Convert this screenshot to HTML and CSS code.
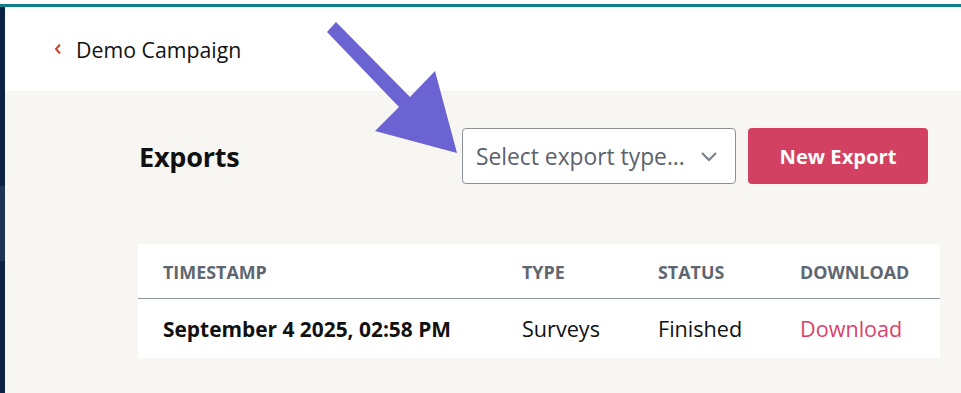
FILE: index.html
```html
<!DOCTYPE html>
<html>
<head>
<meta charset="utf-8">
<link rel="stylesheet" href="styles.css">
</head>
<body>
<div class="topgap"></div>
<div class="topbar"></div>
<div class="app">
  <aside class="sidebar">
    <div class="side-top"></div>
    <div class="side-active"></div>
    <div class="side-rest"></div>
  </aside>
  <main class="main">
    <header class="header">
      <a class="back" href="#">
        <svg class="back-icon" width="8" height="12" viewBox="0 0 8 12"><path d="M6 1.5 L2 6 L6 10.5" fill="none" stroke="#c8462f" stroke-width="2"/></svg>
        <span>Demo Campaign</span>
      </a>
    </header>
    <section class="content">
      <div class="toolbar">
        <h1 class="title">Exports</h1>
        <div class="actions">
          <div class="select">
            <span class="placeholder">Select export type...</span>
            <svg class="chev" width="18" height="11" viewBox="0 0 18 11"><path d="M2 2 L9 9 L16 2" fill="none" stroke="#7b818b" stroke-width="2.2"/></svg>
          </div>
          <button class="btn">New Export</button>
        </div>
      </div>
      <div class="table">
        <div class="row head">
          <div class="cell">TIMESTAMP</div>
          <div class="cell">TYPE</div>
          <div class="cell">STATUS</div>
          <div class="cell">DOWNLOAD</div>
        </div>
        <div class="row body">
          <div class="cell strong">September 4 2025, 02:58 PM</div>
          <div class="cell">Surveys</div>
          <div class="cell">Finished</div>
          <div class="cell"><a class="link" href="#">Download</a></div>
        </div>
      </div>
    </section>
  </main>
</div>
<svg class="annot" width="961" height="393" viewBox="0 0 961 393">
  <polygon points="336,22 410,97 435,71 457,153 375,131 399,107 327,32" fill="#6a63d1"/>
</svg>
</body>
</html>
```
FILE: styles.css
```css
* { box-sizing: border-box; }
html, body { margin: 0; padding: 0; }
body {
  font-family: "Open Sans", "Liberation Sans", sans-serif;
  background: #f7f6f3;
  color: #111;
  height: 393px;
  overflow: hidden;
  position: relative;
}
.topgap { height: 4px; background: #fff; }
.topbar { height: 3px; background: #0f7f88; }
.app { display: flex; height: 386px; }
.sidebar { width: 5px; display: flex; flex-direction: column; }
.side-top { height: 179px; background: #0b2244; }
.side-active { height: 75px; background: #1d3459; }
.side-rest { flex: 1; background: #0b2244; }
.main { flex: 1; display: flex; flex-direction: column; }
.header { height: 84px; background: #fff; display: flex; align-items: center; padding-left: 49px; }
.back { display: flex; align-items: center; gap: 14px; text-decoration: none; color: #111; font-size: 21.3px; }
.back-icon { display: block; }
.content { flex: 1; padding: 37px 21px 0 133px; }
.toolbar { display: flex; align-items: center; justify-content: space-between; padding-right: 12px; }
.title { margin: 0; font-size: 27px; font-weight: 700; padding-left: 1px; letter-spacing: -0.2px; }
.actions { display: flex; gap: 12px; }
.select {
  width: 274px; height: 56px; background: #fff;
  border: 1px solid #8c9199; border-radius: 4px;
  display: flex; align-items: center; justify-content: space-between;
  padding: 0 17px 0 13px;
}
.placeholder { font-size: 22.8px; color: #5b626c; }
.chev { display: block; }
.btn {
  width: 180px; height: 56px; border: none; border-radius: 4px;
  background: #d24161; color: #fff; font-family: inherit;
  font-size: 20.2px; font-weight: 700;
}
.table { margin-top: 60px; background: #fff; }
.row { display: grid; grid-template-columns: 359px 136px 142px 1fr; align-items: center; }
.row.head { height: 55px; border-bottom: 1px solid #8e949c; }
.row.body { height: 59px; }
.cell { padding-left: 25px; font-size: 21.6px; }
.head .cell { font-size: 17.9px; font-weight: 700; color: #5f6670; padding-top: 2px; }
.body .strong { font-weight: 700; font-size: 20.9px; }
.link { color: #d9436a; text-decoration: none; }
.annot { position: absolute; left: 0; top: 0; pointer-events: none; }
```
